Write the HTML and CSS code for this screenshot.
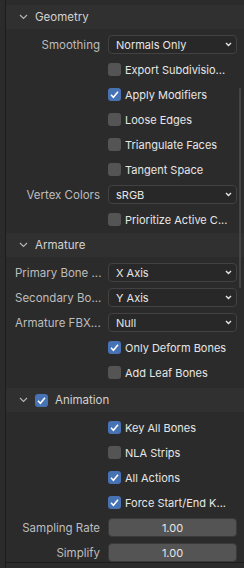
FILE: index.html
```html
<!DOCTYPE html>
<html>
<head>
<meta charset="utf-8">
<link rel="stylesheet" href="styles.css">
</head>
<body>
<div class="app">
  <div class="edge"></div>
  <div class="main">
    <div class="panel">
      <section class="sec sec-geo">
        <div class="hdr">
          <svg class="chev" width="9" height="6" viewBox="0 0 9 6"><path d="M1 1 L4.5 4.5 L8 1" fill="none" stroke="#b4b4b4" stroke-width="1.2"/></svg>
          <span class="htxt">Geometry</span>
        </div>
        <div class="body">
          <div class="row"><div class="lbl">Smoothing</div><div class="fld"><div class="menu"><span>Normals Only</span><svg class="dd" width="7" height="5" viewBox="0 0 7 5"><path d="M1 1 L3.5 3.5 L6 1" fill="none" stroke="#e6e6e6" stroke-width="1.4"/></svg></div></div></div>
          <div class="row"><div class="lbl"></div><div class="fld"><span class="cb"></span><span class="cbl">Export Subdivisio...</span></div></div>
          <div class="row"><div class="lbl"></div><div class="fld"><span class="cb on"><svg width="13" height="13" viewBox="0 0 13 13"><path d="M3 6.8 L5.4 9.2 L10 3.8" fill="none" stroke="#fff" stroke-width="1.6"/></svg></span><span class="cbl">Apply Modifiers</span></div></div>
          <div class="row"><div class="lbl"></div><div class="fld"><span class="cb"></span><span class="cbl">Loose Edges</span></div></div>
          <div class="row"><div class="lbl"></div><div class="fld"><span class="cb"></span><span class="cbl">Triangulate Faces</span></div></div>
          <div class="row"><div class="lbl"></div><div class="fld"><span class="cb"></span><span class="cbl">Tangent Space</span></div></div>
          <div class="row"><div class="lbl">Vertex Colors</div><div class="fld"><div class="menu"><span>sRGB</span><svg class="dd" width="7" height="5" viewBox="0 0 7 5"><path d="M1 1 L3.5 3.5 L6 1" fill="none" stroke="#e6e6e6" stroke-width="1.4"/></svg></div></div></div>
          <div class="row"><div class="lbl"></div><div class="fld"><span class="cb"></span><span class="cbl">Prioritize Active C...</span></div></div>
        </div>
      </section>
      <section class="sec sec-arm">
        <div class="hdr">
          <svg class="chev" width="9" height="6" viewBox="0 0 9 6"><path d="M1 1 L4.5 4.5 L8 1" fill="none" stroke="#b4b4b4" stroke-width="1.2"/></svg>
          <span class="htxt">Armature</span>
        </div>
        <div class="body">
          <div class="row"><div class="lbl">Primary Bone ...</div><div class="fld"><div class="menu"><span>X Axis</span><svg class="dd" width="7" height="5" viewBox="0 0 7 5"><path d="M1 1 L3.5 3.5 L6 1" fill="none" stroke="#e6e6e6" stroke-width="1.4"/></svg></div></div></div>
          <div class="row"><div class="lbl">Secondary Bo...</div><div class="fld"><div class="menu"><span>Y Axis</span><svg class="dd" width="7" height="5" viewBox="0 0 7 5"><path d="M1 1 L3.5 3.5 L6 1" fill="none" stroke="#e6e6e6" stroke-width="1.4"/></svg></div></div></div>
          <div class="row"><div class="lbl">Armature FBX...</div><div class="fld"><div class="menu"><span>Null</span><svg class="dd" width="7" height="5" viewBox="0 0 7 5"><path d="M1 1 L3.5 3.5 L6 1" fill="none" stroke="#e6e6e6" stroke-width="1.4"/></svg></div></div></div>
          <div class="row"><div class="lbl"></div><div class="fld"><span class="cb on"><svg width="13" height="13" viewBox="0 0 13 13"><path d="M3 6.8 L5.4 9.2 L10 3.8" fill="none" stroke="#fff" stroke-width="1.6"/></svg></span><span class="cbl">Only Deform Bones</span></div></div>
          <div class="row"><div class="lbl"></div><div class="fld"><span class="cb"></span><span class="cbl">Add Leaf Bones</span></div></div>
        </div>
      </section>
      <section class="sec sec-anim">
        <div class="hdr">
          <svg class="chev" width="9" height="6" viewBox="0 0 9 6"><path d="M1 1 L4.5 4.5 L8 1" fill="none" stroke="#b4b4b4" stroke-width="1.2"/></svg>
          <span class="cb on hcb"><svg width="13" height="13" viewBox="0 0 13 13"><path d="M3 6.8 L5.4 9.2 L10 3.8" fill="none" stroke="#fff" stroke-width="1.6"/></svg></span>
          <span class="htxt">Animation</span>
        </div>
        <div class="body">
          <div class="row"><div class="lbl"></div><div class="fld"><span class="cb on"><svg width="13" height="13" viewBox="0 0 13 13"><path d="M3 6.8 L5.4 9.2 L10 3.8" fill="none" stroke="#fff" stroke-width="1.6"/></svg></span><span class="cbl">Key All Bones</span></div></div>
          <div class="row"><div class="lbl"></div><div class="fld"><span class="cb"></span><span class="cbl">NLA Strips</span></div></div>
          <div class="row"><div class="lbl"></div><div class="fld"><span class="cb on"><svg width="13" height="13" viewBox="0 0 13 13"><path d="M3 6.8 L5.4 9.2 L10 3.8" fill="none" stroke="#fff" stroke-width="1.6"/></svg></span><span class="cbl">All Actions</span></div></div>
          <div class="row"><div class="lbl"></div><div class="fld"><span class="cb on"><svg width="13" height="13" viewBox="0 0 13 13"><path d="M3 6.8 L5.4 9.2 L10 3.8" fill="none" stroke="#fff" stroke-width="1.6"/></svg></span><span class="cbl">Force Start/End K...</span></div></div>
          <div class="row"><div class="lbl">Sampling Rate</div><div class="fld"><div class="num">1.00</div></div></div>
          <div class="row"><div class="lbl">Simplify</div><div class="fld"><div class="num">1.00</div></div></div>
        </div>
      </section>
      <div class="scroll"></div>
    </div>
    <div class="foot"></div>
  </div>
</div>
</body>
</html>
```

FILE: styles.css
```css
* { box-sizing: border-box; }
html, body { margin: 0; padding: 0; }
body {
  width: 244px;
  height: 568px;
  overflow: hidden;
  background: #2b2b2b;
  font-family: Inter, "Noto Sans", sans-serif;
  font-size: 11px;
  color: #e6e6e6;
}
.app { display: flex; height: 568px; }
.edge {
  width: 6px;
  flex: none;
  background: #2b2b2b;
  border-right: 1px solid #1c1c1c;
}
.main { flex: 1; display: flex; flex-direction: column; }
.panel {
  position: relative;
  height: 562px;
  overflow: hidden;
  padding-top: 5px;
  background: #2b2b2b;
}
.foot { flex: 1; border-top: 1px solid #1c1c1c; background: #2b2b2b; }
.hdr {
  height: 24px;
  display: flex;
  align-items: center;
  background: #303030;
  padding-left: 13px;
  color: #d2d2d2;
}
.chev { flex: none; margin-right: 7px; }
.htxt { font-size: 11.5px; }
.hcb { margin-right: 7px; }
.body { padding-top: 3px; padding-bottom: 1px; }
.sec-arm .body { padding-bottom: 3px; }
.row { height: 25px; display: flex; align-items: center; }
.lbl {
  width: 102px;
  flex: none;
  padding-left: 9px;
  padding-right: 8px;
  text-align: right;
  color: #bdbdbd;
  font-size: 11.5px;
  white-space: nowrap;
  overflow: hidden;
}
.fld { flex: 1; display: flex; align-items: center; padding-right: 7px; }
.menu {
  flex: 1;
  height: 19px;
  border: 1px solid #424242;
  border-radius: 4px;
  background: #282828;
  display: flex;
  align-items: center;
  justify-content: space-between;
  padding: 0 4px 0 7px;
  color: #e6e6e6;
}
.dd { flex: none; }
.num {
  flex: 1;
  height: 19px;
  border-radius: 4px;
  background: #545454;
  border: 1px solid #3a3a3a;
  display: flex;
  align-items: center;
  justify-content: center;
  color: #e6e6e6;
}
.cb {
  width: 13px;
  height: 13px;
  flex: none;
  border-radius: 3px;
  background: #545454;
  display: inline-flex;
}
.cb.on { background: #4772b3; }
.cbl { margin-left: 4px; color: #e6e6e6; white-space: nowrap; }
.scroll {
  position: absolute;
  right: 3px;
  top: 88px;
  width: 2px;
  height: 200px;
  background: #444444;
  border-radius: 1px;
}
```
